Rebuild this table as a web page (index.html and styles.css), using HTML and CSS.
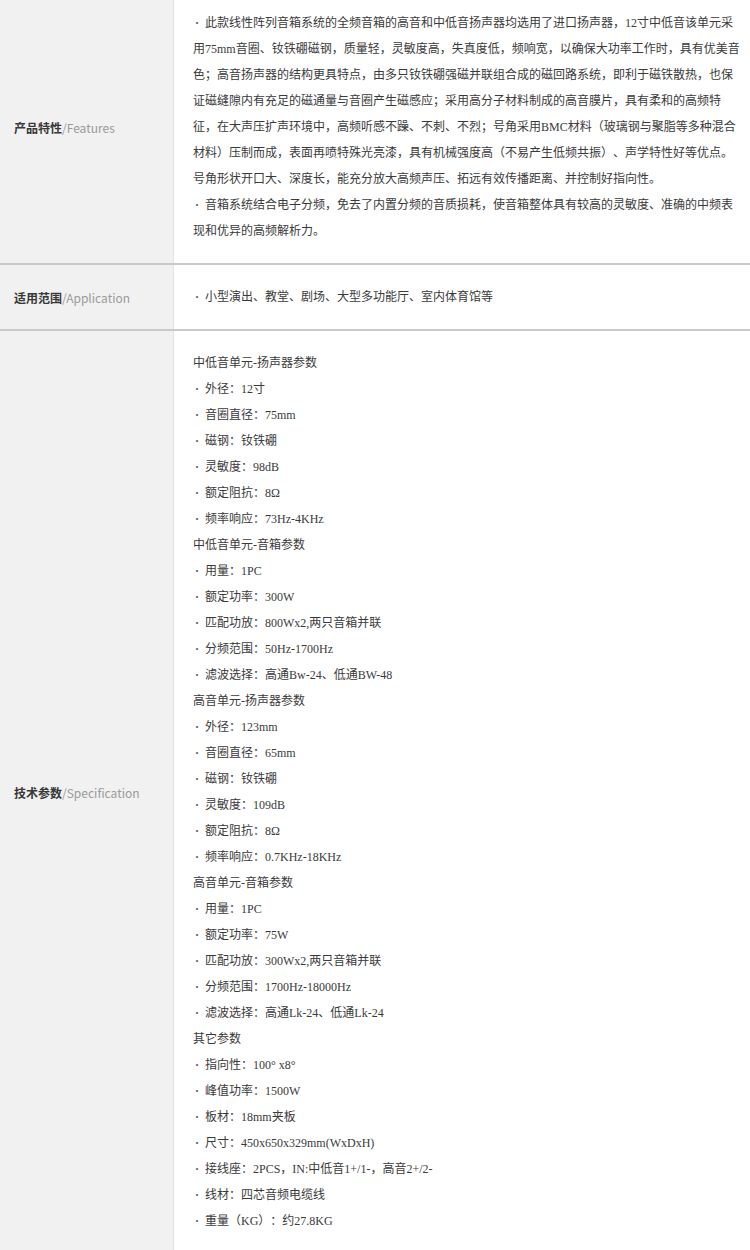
FILE: index.html
```html
<!DOCTYPE html>
<html lang="zh-CN">
<head>
<meta charset="utf-8">
<title>产品参数</title>
<link rel="stylesheet" href="styles.css">
</head>
<body>
<div class="spec-table">
  <div class="row">
    <div class="label"><b>产品特性</b><span>/Features</span></div>
    <div class="content">
      <p><span class="dot">·</span>此款线性阵列音箱系统的全频音箱的高音和中低音扬声器均选用了进口扬声器，12寸中低音该单元采用75mm音圈、钕铁硼磁钢，质量轻，灵敏度高，失真度低，频响宽，以确保大功率工作时，具有优美音色；高音扬声器的结构更具特点，由多只钕铁硼强磁并联组合成的磁回路系统，即利于磁铁散热，也保证磁缝隙内有充足的磁通量与音圈产生磁感应；采用高分子材料制成的高音膜片，具有柔和的高频特征，在大声压扩声环境中，高频听感不躁、不刺、不烈；号角采用BMC材料（玻璃钢与聚脂等多种混合材料）压制而成，表面再喷特殊光亮漆，具有机械强度高（不易产生低频共振）、声学特性好等优点。号角形状开口大、深度长，能充分放大高频声压、拓远有效传播距离、并控制好指向性。</p>
      <p><span class="dot">·</span>音箱系统结合电子分频，免去了内置分频的音质损耗，使音箱整体具有较高的灵敏度、准确的中频表现和优异的高频解析力。</p>
    </div>
  </div>
  <div class="row">
    <div class="label"><b>适用范围</b><span>/Application</span></div>
    <div class="content">
      <p><span class="dot">·</span>小型演出、教堂、剧场、大型多功能厅、室内体育馆等</p>
    </div>
  </div>
  <div class="row">
    <div class="label"><b>技术参数</b><span>/Specification</span></div>
    <div class="content">
      <p>中低音单元-扬声器参数</p>
      <p><span class="dot">·</span>外径：12寸</p>
      <p><span class="dot">·</span>音圈直径：75mm</p>
      <p><span class="dot">·</span>磁钢：钕铁硼</p>
      <p><span class="dot">·</span>灵敏度：98dB</p>
      <p><span class="dot">·</span>额定阻抗：8Ω</p>
      <p><span class="dot">·</span>频率响应：73Hz-4KHz</p>
      <p>中低音单元-音箱参数</p>
      <p><span class="dot">·</span>用量：1PC</p>
      <p><span class="dot">·</span>额定功率：300W</p>
      <p><span class="dot">·</span>匹配功放：800Wx2,两只音箱并联</p>
      <p><span class="dot">·</span>分频范围：50Hz-1700Hz</p>
      <p><span class="dot">·</span>滤波选择：高通Bw-24、低通BW-48</p>
      <p>高音单元-扬声器参数</p>
      <p><span class="dot">·</span>外径：123mm</p>
      <p><span class="dot">·</span>音圈直径：65mm</p>
      <p><span class="dot">·</span>磁钢：钕铁硼</p>
      <p><span class="dot">·</span>灵敏度：109dB</p>
      <p><span class="dot">·</span>额定阻抗：8Ω</p>
      <p><span class="dot">·</span>频率响应：0.7KHz-18KHz</p>
      <p>高音单元-音箱参数</p>
      <p><span class="dot">·</span>用量：1PC</p>
      <p><span class="dot">·</span>额定功率：75W</p>
      <p><span class="dot">·</span>匹配功放：300Wx2,两只音箱并联</p>
      <p><span class="dot">·</span>分频范围：1700Hz-18000Hz</p>
      <p><span class="dot">·</span>滤波选择：高通Lk-24、低通Lk-24</p>
      <p>其它参数</p>
      <p><span class="dot">·</span>指向性：100° x8°</p>
      <p><span class="dot">·</span>峰值功率：1500W</p>
      <p><span class="dot">·</span>板材：18mm夹板</p>
      <p><span class="dot">·</span>尺寸：450x650x329mm(WxDxH)</p>
      <p><span class="dot">·</span>接线座：2PCS，IN:中低音1+/1-，高音2+/2-</p>
      <p><span class="dot">·</span>线材：四芯音频电缆线</p>
      <p><span class="dot">·</span>重量（KG）：约27.8KG</p>
    </div>
  </div>
</div>
</body>
</html>
```

FILE: styles.css
```css
html, body {
  margin: 0;
  padding: 0;
  background: #ffffff;
}

body {
  font-family: "Liberation Serif", "Noto Sans CJK SC", serif;
  font-size: 12px;
  color: #3a3a3a;
}

.spec-table {
  margin-top: -9px;
  width: 750px;
}

.row {
  display: flex;
  border-bottom: 2px solid #c9c9c9;
}

.label {
  flex: 0 0 174px;
  background: #f1f1f1;
  border-right: 1px solid #e2e2e2;
  display: flex;
  align-items: center;
  padding-left: 14px;
  box-sizing: border-box;
  font-family: "Noto Sans CJK SC", sans-serif;
  font-size: 12px;
}

.label b {
  font-weight: 700;
  color: #383838;
}

.label span {
  color: #9a9a9a;
}

.content {
  flex: 1;
  padding: 19px 6px 19px 19px;
  line-height: 26px;
  text-spacing-trim: space-all;
}

.content p {
  margin: 0;
}

.dot {
  display: inline-block;
  width: 12px;
  padding-left: 2px;
  box-sizing: border-box;
  font-weight: 700;
  color: #555555;
}
```
